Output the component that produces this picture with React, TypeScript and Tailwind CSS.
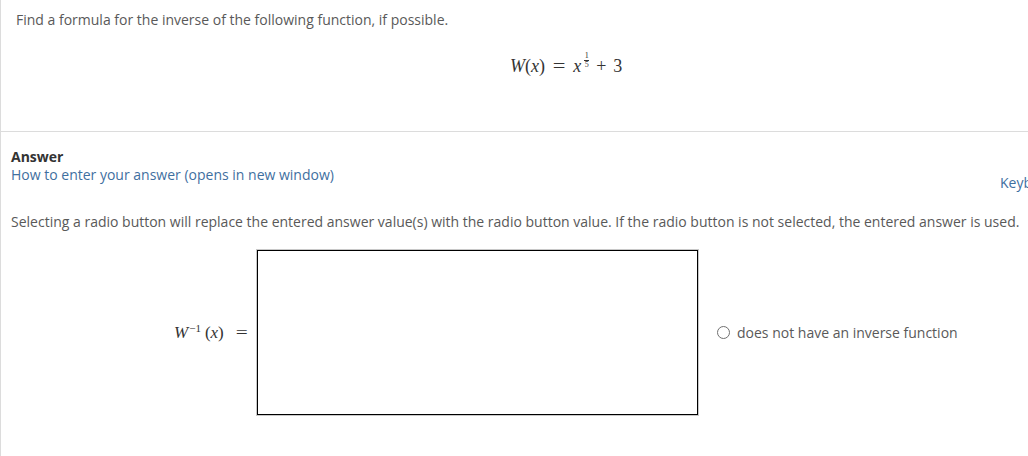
import { useState } from "react";

const sans = { fontFamily: '"Open Sans", "Noto Sans", sans-serif' };
const serif = { fontFamily: '"Liberation Serif", "Times New Roman", serif' };

function Formula() {
  return (
    <div className="flex items-center text-[18px] leading-[20px] text-[#333]" style={serif}>
      <span className="italic">W</span>
      <span>(</span>
      <span className="italic">x</span>
      <span>)</span>
      <span className="mx-[9px] scale-x-125">=</span>
      <span className="italic">x</span>
      <span className="ml-[3px] flex flex-col items-center text-[8px] leading-[8px] -mt-[12px]">
        <span>1</span>
        <span className="block h-px w-[5px] bg-[#333]" />
        <span>5</span>
      </span>
      <span className="mx-[7px]">+</span>
      <span>3</span>
    </div>
  );
}

export default function App() {
  const [noInverse, setNoInverse] = useState(false);
  const [value, setValue] = useState("");

  return (
    <div className="h-[456px] w-[1028px] overflow-hidden border-l border-[#dcdcdc] bg-white" style={sans}>
      <div className="h-[132px] border-b border-[#dcdcdc] pl-[15px] pt-[10px]">
        <p className="text-[14px] leading-[19px] text-[#595959]">
          Find a formula for the inverse of the following function, if possible.
        </p>
        <div className="mt-[27px] ml-[494px]">
          <Formula />
        </div>
      </div>

      <div className="pl-[10px] pt-[16px]">
        <div className="flex">
          <div className="flex-1">
            <p className="text-[14px] font-bold leading-[18px] text-[#333]">Answer</p>
            <a href="#" className="block text-[14px] leading-[17px] text-[#3f6f9f]">
              How to enter your answer (opens in new window)
            </a>
          </div>
          <a href="#" className="mt-[26px] block w-[28px] overflow-hidden whitespace-nowrap text-[14px] leading-[18px] text-[#3f6f9f]">
            Keyboard Shortcuts
          </a>
        </div>

        <p className="mt-[20px] whitespace-nowrap text-[14px] leading-[19px] text-[#595959]">
          Selecting a radio button will replace the entered answer value(s) with the radio button value. If the radio button is not selected, the entered answer is used.
        </p>

        <div className="mt-[19px] flex items-center">
          <div className="ml-[163px] flex w-[83px] items-center pr-[10px] text-[17px] text-[#333]" style={serif}>
            <span className="italic">W</span>
            <span className="-mt-[9px] ml-[1px] text-[11px]">−1</span>
            <span className="ml-[4px]">(</span>
            <span className="italic">x</span>
            <span>)</span>
            <span className="ml-auto scale-x-125">=</span>
          </div>
          <textarea
            value={value}
            onChange={(e) => setValue(e.target.value)}
            className="h-[165px] w-[441px] resize-none border border-black outline-none shadow-[0_0_0_1px_#c8c8c8]"
          />
          <label className="ml-[19px] flex cursor-pointer items-center gap-[7px] text-[14px] text-[#595959]">
            <span
              onClick={() => setNoInverse(!noInverse)}
              className="flex h-[13px] w-[13px] items-center justify-center rounded-full border border-[#707070]"
            >
              {noInverse && <span className="h-[7px] w-[7px] rounded-full bg-[#333]" />}
            </span>
            does not have an inverse function
          </label>
        </div>
      </div>
    </div>
  );
}
